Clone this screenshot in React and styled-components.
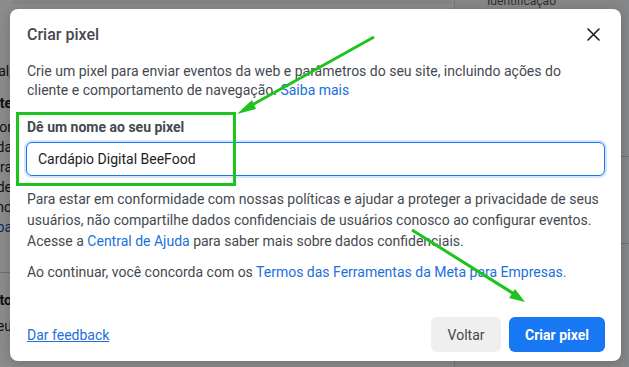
import React from 'react';
import styled, {createGlobalStyle} from 'styled-components';

const GlobalStyle = createGlobalStyle`
  html, body {
    margin: 0;
    padding: 0;
  }
  body {
    font-family: Roboto, "Liberation Sans", Arial, sans-serif;
    overflow: hidden;
  }
  * {
    box-sizing: border-box;
  }
`;

export default function App() {
  return (
    <>
      <GlobalStyle />
      <Screen>
        <PageBehind>
          <EdgeColumn>
            <Frag top={62}>Digital,</Frag>
            <Frag top={14} bold>Pixel do site</Frag>
            <Frag top={6}>servidor</Frag>
            <Frag top={2}>tracking da</Frag>
            <Frag top={2}>site para</Frag>
            <Frag top={2}>sobre de</Frag>
            <Frag top={2}>como</Frag>
            <Frag top={2} blue>Saiba</Frag>
            <Rule />
            <Frag top={18} bold>Evento</Frag>
            <Frag top={8}>do seu</Frag>
          </EdgeColumn>
          <Middle>
            <TopBar />
          </Middle>
          <SidePanel>
            <SideTop>Identificação</SideTop>
            <SideFrag top={30} bold>a</SideFrag>
            <SideFrag top={6}>e</SideFrag>
            <SideFrag top={2}>n</SideFrag>
            <SideFrag top={2}>n</SideFrag>
            <Rule />
            <SideFrag top={14} bold blue>t</SideFrag>
            <SideFrag top={0} small>fi</SideFrag>
            <Rule />
            <SideFrag top={30} bold>a</SideFrag>
            <SideFrag top={6}>e</SideFrag>
            <SideFrag top={2}>n</SideFrag>
            <SideFrag top={2}>n</SideFrag>
          </SidePanel>
        </PageBehind>
        <Dim />

        <Modal>
          <Header>
            <Title>Criar pixel</Title>
            <CloseButton aria-label="Fechar">
              <svg width="13" height="13" viewBox="0 0 13 13">
                <path d="M1 1 L12 12 M12 1 L1 12" stroke="#1c1e21" strokeWidth="1.6" strokeLinecap="round" />
              </svg>
            </CloseButton>
          </Header>

          <Body>
            <Text>
              Crie um pixel para enviar eventos da web e parâmetros do seu site, incluindo ações do cliente e
              comportamento de navegação. <Link>Saiba mais</Link>
            </Text>

            <Field>
              <Label>Dê um nome ao seu pixel</Label>
              <Input defaultValue="Cardápio Digital BeeFood" />
            </Field>

            <Text loose gap={13}>
              Para estar em conformidade com nossas políticas e ajudar a proteger a privacidade de seus usuários, não
              compartilhe dados confidenciais de usuários conosco ao configurar eventos. Acesse a{' '}
              <Link>Central de Ajuda</Link> para saber mais sobre dados confidenciais.
            </Text>

            <Text loose gap={10}>
              Ao continuar, você concorda com os <Link>Termos das Ferramentas da Meta para Empresas.</Link>
            </Text>
          </Body>

          <Footer>
            <Feedback>Dar feedback</Feedback>
            <Actions>
              <Button>Voltar</Button>
              <Button primary>Criar pixel</Button>
            </Actions>
          </Footer>
        </Modal>

        <Annotations width="629" height="367" viewBox="0 0 629 367">
          <rect x="17.5" y="113.5" width="217" height="71" fill="none" stroke="#1ec41e" strokeWidth="3" />
          <line x1="374" y1="37" x2="243" y2="110" stroke="#1ec41e" strokeWidth="3" />
          <polygon points="237,114 252,100 256,109" fill="#1ec41e" />
          <line x1="412" y1="230" x2="519" y2="297" stroke="#1ec41e" strokeWidth="3" />
          <polygon points="525,302 509,298 515,289" fill="#1ec41e" />
        </Annotations>
      </Screen>
    </>
  );
}

const Screen = styled.div`
  position: relative;
  width: 629px;
  height: 367px;
  overflow: hidden;
  background: #fff;
`;

const PageBehind = styled.div`
  display: flex;
  height: 100%;
`;

const EdgeColumn = styled.div`
  width: 12px;
  display: flex;
  flex-direction: column;
  align-items: flex-end;
  overflow: hidden;
  font-size: 14px;
`;

const Frag = styled.div`
  margin-top: ${p => p.top}px;
  white-space: nowrap;
  line-height: 18px;
  font-weight: ${p => (p.bold ? 700 : 400)};
  color: ${p => (p.blue ? '#0a4fb3' : '#1c1e21')};
`;

const Rule = styled.div`
  align-self: stretch;
  height: 1px;
  margin-top: 36px;
  background: #ccc;
`;

const Middle = styled.div`
  flex: 1;
`;

const TopBar = styled.div`
  width: 440px;
  height: 4px;
  background: #f0f0f0;
`;

const SidePanel = styled.div`
  width: 175px;
  display: flex;
  flex-direction: column;
  overflow: hidden;
  background: #f5f6f7;
  border-left: 1px solid #ddd;
  padding-left: 150px;
  font-size: 14px;
`;

const SideTop = styled.div`
  font-size: 12px;
  color: #555;
  margin-left: -118px;
  margin-top: -6px;
  white-space: nowrap;
`;

const SideFrag = styled.div`
  margin-top: ${p => p.top}px;
  line-height: 18px;
  font-size: ${p => (p.small ? 12 : 14)}px;
  font-weight: ${p => (p.bold ? 700 : 400)};
  color: ${p => (p.blue ? '#0a4fb3' : '#1c1e21')};
`;

const Dim = styled.div`
  position: absolute;
  inset: 0;
  background: rgba(0, 0, 0, 0.45);
`;

const Modal = styled.div`
  position: absolute;
  left: 10px;
  top: 9px;
  width: 611px;
  height: 352px;
  background: #fff;
  border-radius: 8px;
  box-shadow: 0 2px 12px rgba(0, 0, 0, 0.2);
  display: flex;
  flex-direction: column;
  padding: 0 16px 9px 17px;
  color: #444950;
`;

const Header = styled.div`
  height: 51px;
  display: flex;
  align-items: center;
  justify-content: space-between;
`;

const Title = styled.h2`
  margin: 0;
  font-size: 16px;
  font-weight: 500;
  color: #444950;
`;

const CloseButton = styled.button`
  border: 0;
  background: none;
  padding: 0;
  margin-right: 5px;
  display: flex;
  cursor: pointer;
`;

const Body = styled.div`
  display: flex;
  flex-direction: column;
  padding-top: 2px;
`;

const Text = styled.p`
  margin: ${p => p.gap || 0}px 0 0;
  font-size: 14px;
  line-height: ${p => (p.loose ? 21 : 19)}px;
  color: #444950;
`;

const Link = styled.a`
  color: #216fdb;
  cursor: pointer;
`;

const Field = styled.div`
  display: flex;
  flex-direction: column;
  margin-top: 18px;
`;

const Label = styled.label`
  font-size: 14px;
  font-weight: 700;
  color: #444950;
  line-height: 18px;
`;

const Input = styled.input`
  margin-top: 6px;
  width: 579px;
  height: 34px;
  margin-left: -1px;
  border: 1px solid #1877f2;
  border-radius: 6px;
  box-shadow: 0 0 0 2px rgba(24, 119, 242, 0.18);
  padding: 0 11px;
  font-family: inherit;
  font-size: 14px;
  color: #1c1e21;
  outline: none;
`;

const Footer = styled.div`
  margin-top: auto;
  display: flex;
  align-items: center;
  justify-content: space-between;
`;

const Feedback = styled.a`
  font-size: 14px;
  color: #216fdb;
  text-decoration: underline;
  cursor: pointer;
`;

const Actions = styled.div`
  display: flex;
  gap: 8px;
`;

const Button = styled.button`
  height: 35px;
  padding: 0 16px;
  border: 0;
  border-radius: 6px;
  font-family: inherit;
  font-size: 14px;
  font-weight: ${p => (p.primary ? 700 : 400)};
  color: ${p => (p.primary ? '#fff' : '#444950')};
  background: ${p => (p.primary ? '#1877f2' : '#efefef')};
  min-width: ${p => (p.primary ? 95 : 70)}px;
  cursor: pointer;
`;

const Annotations = styled.svg`
  position: absolute;
  inset: 0;
  pointer-events: none;
`;
